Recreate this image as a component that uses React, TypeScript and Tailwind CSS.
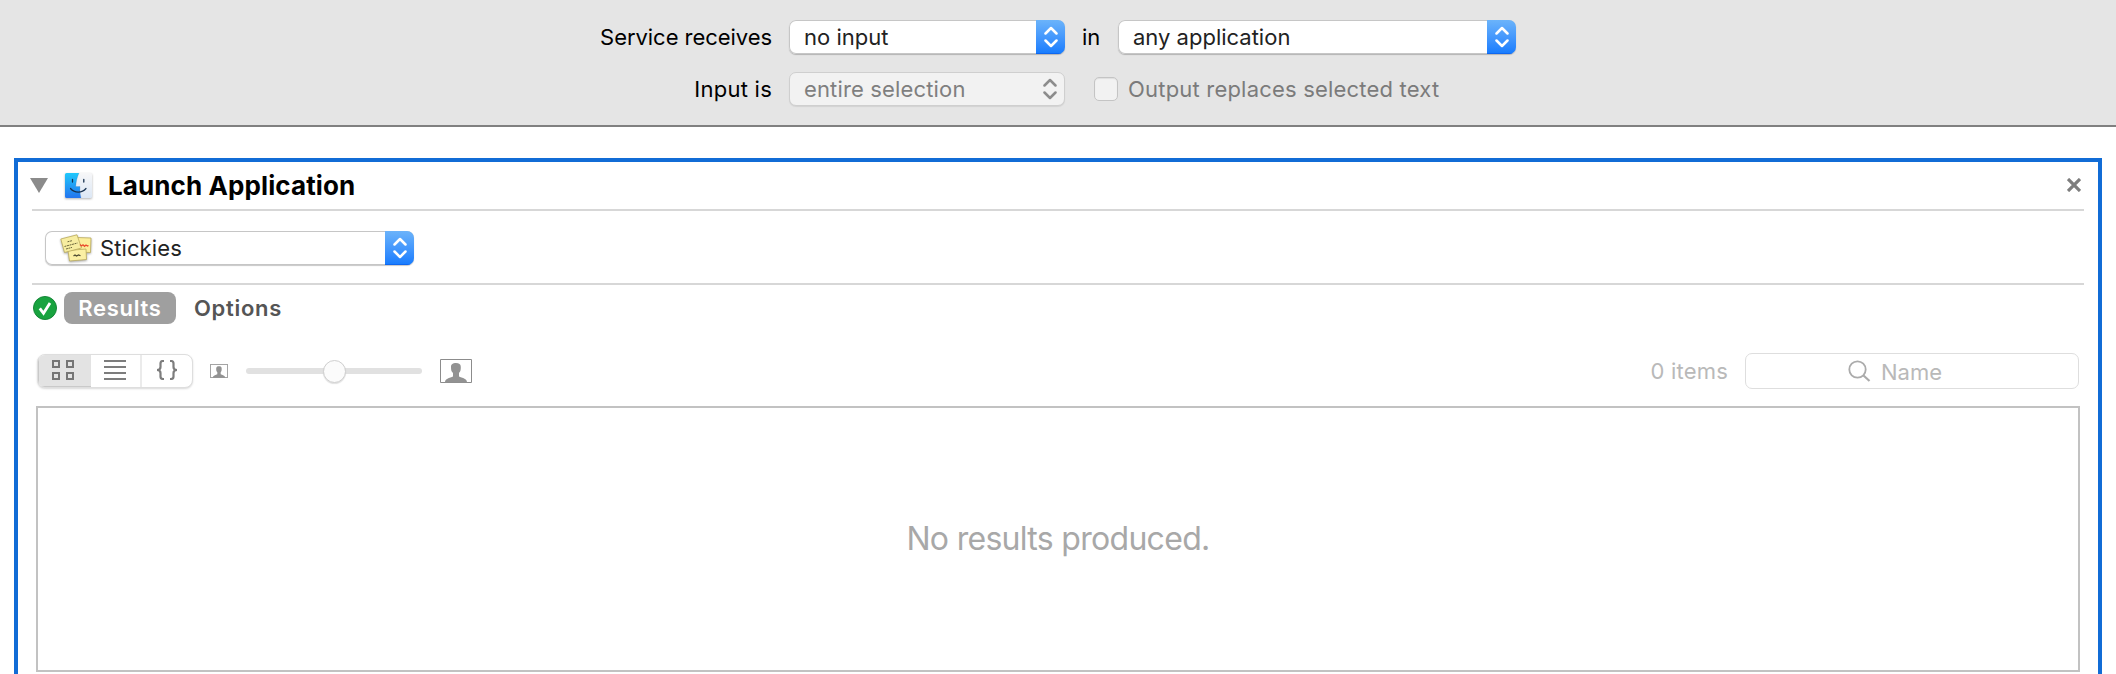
import type { ReactNode } from "react";

function Chevrons({ className }: { className: string }) {
  return (
    <svg className={className} width="14" height="22" viewBox="0 0 14 22" fill="none" stroke="currentColor" strokeWidth="2.5" strokeLinecap="round" strokeLinejoin="round">
      <path d="M1.5 7.5 7 2l5.500 5.500M1.500 14.500 7 20l5.500-5.500" />
    </svg>
  );
}

function Popup({ className, disabled = false, children }: { className: string; disabled?: boolean; children: ReactNode }) {
  return (
    <button
      type="button"
      disabled={disabled}
      className={`flex h-[34px] shrink-0 items-stretch overflow-hidden rounded-[7px] text-left ${
        disabled
          ? "border border-[#cfcfcf] bg-[#f2f2f2] text-[#7f7f7f] shadow-[0_1px_1px_rgba(0,0,0,0.08)]"
          : "bg-white text-[#222] shadow-[inset_0_0_0_1px_#c6c6c6,0_1px_1px_rgba(0,0,0,0.22)]"
      } ${className}`}
    >
      <span className="flex flex-1 items-center whitespace-nowrap">{children}</span>
      <span
        className={`flex w-[29px] items-center justify-center ${
          disabled ? "text-[#8c8c8c]" : "bg-linear-to-b from-[#6bb3fa] to-[#147bfe] text-white shadow-[inset_0_-1px_0_#0f67ef]"
        }`}
      >
        <Chevrons className="block" />
      </span>
    </button>
  );
}

function FinderIcon() {
  return (
    <svg className="block drop-shadow-[0_1px_1px_rgba(0,0,0,0.3)]" width="27" height="25" viewBox="0 0 27 25">
      <defs>
        <linearGradient id="finderBlue" x1="0" y1="0" x2="0" y2="1">
          <stop offset="0" stopColor="#20c8fb" />
          <stop offset="1" stopColor="#2475ef" />
        </linearGradient>
        <linearGradient id="finderWhite" x1="0" y1="0" x2="0" y2="1">
          <stop offset="0" stopColor="#f7f7f8" />
          <stop offset="1" stopColor="#dce7f5" />
        </linearGradient>
      </defs>
      <rect width="27" height="25" rx="1.500" fill="url(#finderWhite)" />
      <path d="M1.500 0H14C12 4.500 11 9 10.800 13.500H15C14.800 17.500 15 21 16 25H1.500Q0 25 0 23.500V1.500Q0 0 1.500 0Z" fill="url(#finderBlue)" />
      <path d="M14 0C12 4.500 11 9 10.800 13.500H15C14.800 17.500 15 21 16 25" fill="none" stroke="#3a6ea5" strokeOpacity=".35" strokeWidth=".6" />
      <path d="M7.500 6.500v2.500M18.800 6.500v2.500" stroke="#173150" strokeWidth="1.300" strokeLinecap="round" />
      <path d="M5.500 15.500C9.500 20.300 17 20.300 21 15.500" fill="none" stroke="#173150" strokeWidth="1.200" strokeLinecap="round" />
    </svg>
  );
}

function StickiesIcon() {
  return (
    <svg className="block drop-shadow-[0_1px_1px_rgba(0,0,0,0.35)]" width="32" height="28" viewBox="0 0 32 28">
      <g stroke="#b9a95c" strokeWidth=".8">
        <path d="M17 3.500 31 4l-.5 14.500L16 18Z" fill="#fcee9b" />
        <path d="M8 16.500 26 15l.5 10.500L9.500 27Z" fill="#fbf0a4" />
        <path d="M.8 5 17 .8 21.500 14 4.500 18.500Z" fill="#f7eda0" />
      </g>
      <path d="M7.500 7.800 12 6.700M4.500 12.500l13-3.500M6 15l6-1.600" stroke="#6d683d" strokeWidth="1" strokeDasharray="2 .6" />
      <path d="m20 10.500 1.500 1.500 1.500-1.200 1.500 1.500 1.500-1.300 1.500 1 1-.5" fill="none" stroke="#ea4a2c" strokeWidth="1.300" />
      <path d="m13.500 22 1.500-1 1.500 1 2-1 2 .8" fill="none" stroke="#4b4830" strokeWidth="1.200" />
    </svg>
  );
}

function PersonFrame({ width, height }: { width: number; height: number }) {
  return (
    <svg className="block shrink-0" width={width} height={height} viewBox="0 0 32 24" preserveAspectRatio="none">
      <rect x=".5" y=".5" width="31" height="23" fill="white" stroke="#8c8c8c" vectorEffect="non-scaling-stroke" />
      <path d="M5 23.500C5 20 8 19.500 13 17.500V14C11.200 12.500 11 10.500 11 8 11 5 13 4 16 4s4.800 1 4.800 4c0 2.500-.2 4.500-1.800 6v3.500C24 19.500 27 20 27 23.500Z" fill="#929292" />
    </svg>
  );
}

function Header() {
  return (
    <header className="h-[127px] border-b-2 border-[#808080] bg-[#e5e5e5] pt-5 text-black">
      <div className="flex h-[34px] items-center">
        <span className="w-[772px] text-right tracking-[-0.05px]">Service receives</span>
        <Popup className="ml-[17px] w-[276px] pl-[15px]">no input</Popup>
        <span className="w-[53px] pl-[17px]">in</span>
        <Popup className="w-[398px] pl-[15px]">any application</Popup>
      </div>
      <div className="mt-[18px] flex h-[34px] items-center">
        <span className="w-[772px] text-right tracking-[0.25px]">Input is</span>
        <Popup disabled className="ml-[17px] w-[276px] pl-[14px] tracking-[0.15px]">entire selection</Popup>
        <label className="ml-[29px] flex items-center tracking-[0.2px] text-[#7b7b7b]">
          <span className="mr-[10px] block size-6 rounded-[5px] border border-[#c4c4c4] bg-[#f2f2f2] shadow-[inset_0_1px_1px_rgba(0,0,0,0.08)]" />
          Output replaces selected text
        </label>
      </div>
    </header>
  );
}

function ViewSwitch() {
  return (
    <div className="flex h-[34px] w-[156px] overflow-hidden rounded-[8px] border border-[#dedede] bg-white text-[#7d7d7d] shadow-[0_1px_2px_rgba(0,0,0,0.15)]">
      <div className="flex w-[53px] items-center bg-[#e3e3e3] pl-[14px] text-[#757575] shadow-[inset_1px_-1px_0_#c9c9c9]">
        <svg className="mt-[-3px] block" width="22" height="20" fill="none" stroke="currentColor" strokeWidth="2">
          <path d="M1 1h6v6H1zM15 1h6v6h-6zM1 13h6v6H1zM15 13h6v6h-6z" />
        </svg>
      </div>
      <div className="flex w-[51px] items-center border-r-2 border-[#ebebeb] pl-[13px]">
        <svg className="mt-[-3px] block" width="22" height="20" stroke="currentColor" strokeWidth="2">
          <path d="M0 1h22M0 7h22M0 13h22M0 19h22" />
        </svg>
      </div>
      <div className="flex flex-1 items-center justify-center">
        <svg className="mt-[-3px] block" width="22" height="20" fill="none" stroke="currentColor" strokeWidth="2.200">
          <path d="M8 1H7Q4.500 1 4.500 3.500V7Q4.500 10 1 10 4.500 10 4.500 13v3.500Q4.500 19 7 19H8M14 1h1q2.500 0 2.500 2.500V7q0 3 3.500 3-3.500 0-3.500 3v3.500Q17.500 19 15 19h-1" />
        </svg>
      </div>
    </div>
  );
}

function ActionPanel() {
  return (
    <section className="mx-[14px] mt-[31px] h-[516px] overflow-hidden border-4 border-b-0 border-[#116cd6] bg-white">
      <div className="mx-[14px] flex h-[49px] items-start border-b-2 border-[#d7d7d7]">
        <svg className="mt-4 block -ml-[2px]" width="18" height="15">
          <path d="M0 0h18L9 15Z" fill="#8b8b8b" />
        </svg>
        <div className="ml-[17px] mt-[11px]"><FinderIcon /></div>
        <h1 className="ml-[16px] mt-[8px] text-[26px] leading-8 font-bold tracking-[0.1px] text-black">Launch Application</h1>
        <svg className="ml-auto mr-[3px] mt-4 block" width="14" height="14" stroke="#7e7e7e" strokeWidth="3.200">
          <path d="m1 1 12 12M13 1 1 13" />
        </svg>
      </div>
      <div className="mx-[14px] h-[74px] border-b-2 border-[#d7d7d7] pl-[13px] pt-5">
        <Popup className="w-[369px] pl-[15px]">
          <StickiesIcon />
          <span className="ml-[8px] tracking-[0.1px]">Stickies</span>
        </Popup>
      </div>
      <div className="flex h-[46px] items-center pl-[15px]">
        <svg className="mb-[1px] block" width="24" height="24">
          <circle cx="12" cy="12" r="11.500" fill="#18a33f" stroke="#168638" />
          <path d="m6.800 12.300 3.700 5L17 7" fill="none" stroke="white" strokeWidth="2.800" />
        </svg>
        <div className="ml-[7px] flex h-8 w-[112px] items-center justify-center rounded-[8px] bg-[#9f9f9f] font-semibold tracking-[0.7px] text-white">Results</div>
        <div className="ml-[18px] font-semibold tracking-[0.7px] text-[#555]">Options</div>
      </div>
      <div className="mx-[18px] mt-[19px] flex h-[42px] items-center">
        <div className="ml-[1px]"><ViewSwitch /></div>
        <div className="ml-[17px]"><PersonFrame width={18} height={14} /></div>
        <div className="ml-[18px] flex h-6 w-[176px] items-center">
          <div className="flex h-[6px] w-full items-center justify-center rounded-full bg-[#e1e1e1]">
            <div className="size-[23px] shrink-0 rounded-full border border-[#d0d0d0] bg-[#fbfbfb] shadow-[0_1px_1px_rgba(0,0,0,0.12)]" />
          </div>
        </div>
        <div className="ml-[18px]"><PersonFrame width={32} height={24} /></div>
        <span className="ml-auto tracking-[0.2px] text-[#b9b9b9]">0 items</span>
        <div className="ml-[17px] mr-[1px] flex h-9 w-[334px] items-center rounded-[7px] border-[1.500px] border-[#dedede] pl-[102px] text-[#b9b9b9]">
          <svg className="block" width="23" height="22" fill="none" stroke="#ababab" strokeWidth="1.800">
            <circle cx="9.500" cy="9.500" r="8.200" />
            <path d="m15.500 15.500 6 5.500" strokeWidth="2.200" />
          </svg>
          <span className="ml-[10px] mt-[2px]">Name</span>
        </div>
      </div>
      <div className="mx-[18px] mt-[14px] flex h-[266px] items-center justify-center border-2 border-[#c2c2c2] text-[32px] tracking-[-0.7px] text-[#a8a8a8]">
        No results produced.
      </div>
    </section>
  );
}

export default function App() {
  return (
    <main className="h-[674px] overflow-hidden bg-white font-['Inter',sans-serif] text-[22px] leading-7 whitespace-nowrap">
      <Header />
      <ActionPanel />
    </main>
  );
}
